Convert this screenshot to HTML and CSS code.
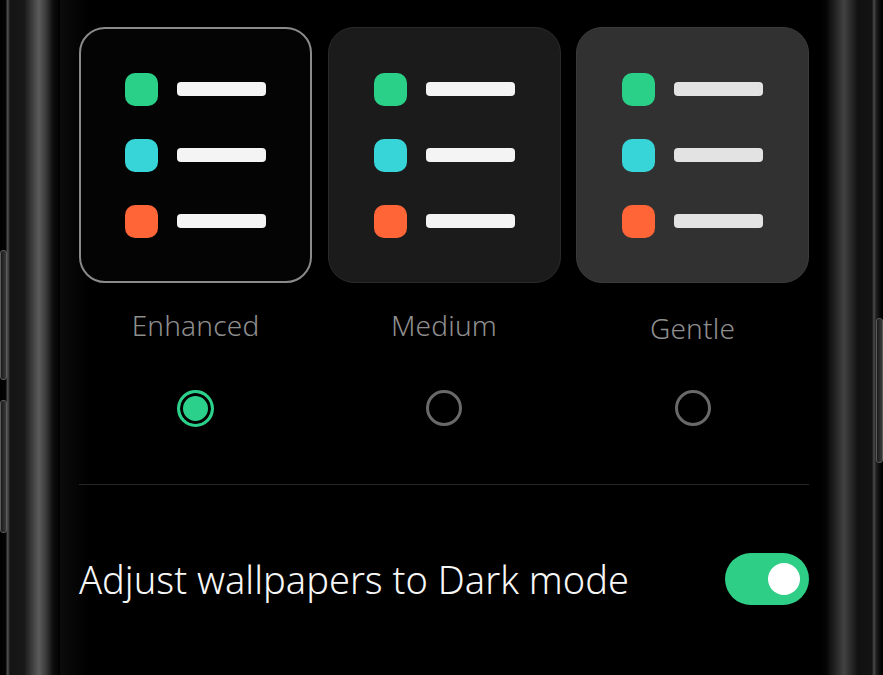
FILE: index.html
```html
<!DOCTYPE html>
<html lang="en">
<head>
    <meta charset="UTF-8">
    <meta name="viewport" content="width=device-width, initial-scale=1.0">
    <title>Dark mode style</title>
    <link rel="stylesheet" href="styles.css">
</head>
<body>

    <div class="phone">
        <div class="bezel bezel-left">
            <span class="side-key key-a"></span>
            <span class="side-key key-b"></span>
        </div>

        <div class="screen">
            <div class="styles">
                <div class="style-option">
                    <div class="preview preview-enhanced">
                        <div class="preview-list">
                            <div class="preview-row"><span class="dot green"></span><span class="bar"></span></div>
                            <div class="preview-row"><span class="dot cyan"></span><span class="bar"></span></div>
                            <div class="preview-row"><span class="dot orange"></span><span class="bar"></span></div>
                        </div>
                    </div>
                    <div class="style-label">Enhanced</div>
                    <span class="radio checked"></span>
                </div>

                <div class="style-option">
                    <div class="preview preview-medium">
                        <div class="preview-list">
                            <div class="preview-row"><span class="dot green"></span><span class="bar"></span></div>
                            <div class="preview-row"><span class="dot cyan"></span><span class="bar"></span></div>
                            <div class="preview-row"><span class="dot orange"></span><span class="bar"></span></div>
                        </div>
                    </div>
                    <div class="style-label">Medium</div>
                    <span class="radio"></span>
                </div>

                <div class="style-option">
                    <div class="preview preview-gentle">
                        <div class="preview-list">
                            <div class="preview-row"><span class="dot green"></span><span class="bar"></span></div>
                            <div class="preview-row"><span class="dot cyan"></span><span class="bar"></span></div>
                            <div class="preview-row"><span class="dot orange"></span><span class="bar"></span></div>
                        </div>
                    </div>
                    <div class="style-label label-low">Gentle</div>
                    <span class="radio"></span>
                </div>
            </div>

            <div class="divider"></div>

            <div class="setting-row">
                <span class="setting-title">Adjust wallpapers to Dark mode</span>
                <span class="switch on"><span class="knob"></span></span>
            </div>
        </div>

        <div class="bezel bezel-right">
            <span class="side-key key-c"></span>
        </div>
    </div>

</body>
</html>
```

FILE: styles.css
```css
html, body {
    margin: 0;
    padding: 0;
    background: #000;
    height: 675px;
    overflow: hidden;
}
body {
    font-family: "Noto Sans", "Open Sans", sans-serif;
    font-weight: 300;
    color: #f5f5f5;
}
.phone {
    display: flex;
    height: 675px;
}

/* frame */
.bezel {
    position: relative;
    flex: none;
}
.bezel-left {
    width: 60px;
    background: linear-gradient(to right,
        #000 0, #050505 6px, #4a4a4a 7px, #4a4a4a 8px, #141414 10px,
        #181818 24px, #3c3c3c 32px, #5c5c5c 39px, #3a3a3a 46px,
        #0e0e0e 53px, #000 60px);
}
.bezel-right {
    width: 63px;
    background: linear-gradient(to right,
        #000 0, #040404 6px, #262626 16px, #424242 24px, #262626 32px,
        #101010 38px, #141414 52px, #4a4a4a 54px, #222 56px,
        #080808 60px, #000 63px);
}
.side-key {
    position: absolute;
    width: 7px;
    border: 1px solid #5a5a5a;
    border-radius: 3px;
    background: linear-gradient(to right, #1a1a1a, #3a3a3a);
    box-sizing: border-box;
}
.key-a { left: 0; top: 250px; height: 130px; }
.key-b { left: 0; top: 400px; height: 133px; }
.key-c { right: 0; top: 318px; height: 145px; }

/* screen */
.screen {
    flex: 1;
    padding: 27px 0 0 19px;
    background: linear-gradient(to right, #0b0b0b 0, #000 30px);
}
.styles {
    display: grid;
    grid-template-columns: repeat(3, 233px);
    column-gap: 15.5px;
    width: 730px;
}
.style-option {
    display: flex;
    flex-direction: column;
    align-items: center;
}
.preview {
    width: 233px;
    height: 256px;
    box-sizing: border-box;
    border-radius: 26px;
    display: flex;
    align-items: center;
    justify-content: center;
}
.preview-enhanced {
    background: #040404;
    border: 2px solid #8a8a8a;
}
.preview-medium {
    background: #1b1b1b;
    border: 1px solid #2a2a2a;
}
.preview-gentle {
    background: #313131;
    border: 1px solid #3b3b3b;
}
.preview-list {
    display: flex;
    flex-direction: column;
    gap: 33px;
}
.preview-row {
    display: flex;
    align-items: center;
    gap: 19px;
}
.dot {
    width: 33px;
    height: 33px;
    border-radius: 10px;
}
.dot.green { background: #2ad088; }
.dot.cyan { background: #38d5d8; }
.dot.orange { background: #ff6537; }
.bar {
    width: 89px;
    height: 14px;
    border-radius: 4px;
    background: #f4f4f4;
}
.preview-gentle .bar {
    background: #e3e3e3;
}

.style-label {
    margin-top: 26px;
    font-size: 28px;
    line-height: 32px;
    color: #8e8e8e;
    letter-spacing: 0.2px;
}
.label-low {
    margin-top: 29px;
    margin-bottom: -3px;
}
.radio {
    margin-top: 49px;
    width: 36px;
    height: 36px;
    box-sizing: border-box;
    border: 3px solid #696969;
    border-radius: 50%;
}
.radio.checked {
    width: 37px;
    height: 37px;
    border-color: #2bd08a;
    background: #2bd08a;
    box-shadow: inset 0 0 0 3px #000;
}

.divider {
    width: 730px;
    height: 1px;
    margin-top: 57px;
    background: #262626;
}

.setting-row {
    width: 730px;
    height: 52px;
    margin-top: 68px;
    display: flex;
    align-items: center;
    justify-content: space-between;
}
.setting-title {
    font-size: 38px;
    color: #f7f7f7;
}
.switch {
    width: 84px;
    height: 52px;
    border-radius: 26px;
    background: #2fce86;
    display: flex;
    align-items: center;
    justify-content: flex-end;
    padding: 0 9px;
    box-sizing: border-box;
}
.knob {
    width: 32px;
    height: 32px;
    border-radius: 50%;
    background: #fff;
}
```
